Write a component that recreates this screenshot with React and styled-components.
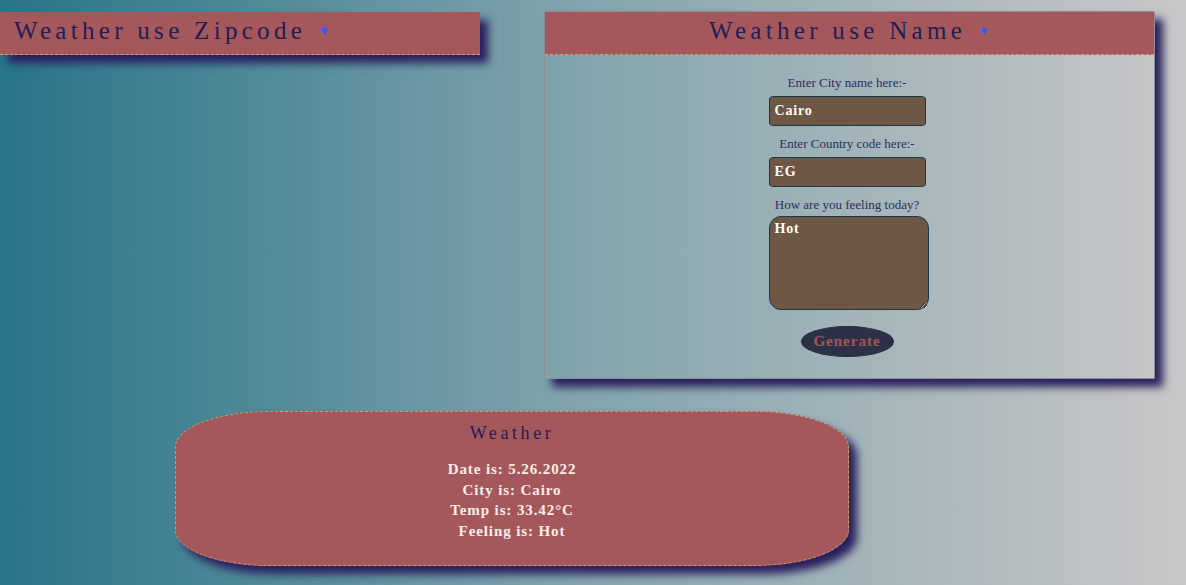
import React from 'react';
import styled, { createGlobalStyle } from 'styled-components';

const GlobalStyle = createGlobalStyle`
  html, body {
    margin: 0;
    padding: 0;
    height: 100%;
  }
  body {
    background: linear-gradient(to right, #287489 0%, #84a5ad 50%, #c8c7c8 100%);
    font-family: "Liberation Serif", "DejaVu Serif", serif;
    overflow: hidden;
  }
`;

const Page = styled.div`
  width: 1186px;
  height: 585px;
  display: flex;
  flex-direction: column;
`;

const TopRow = styled.div`
  display: flex;
  align-items: flex-start;
  gap: 64px;
  padding-top: 11px;
`;

const Section = styled.section`
  width: ${props => props.width};
  margin-top: ${props => props.offset || '0'};
  box-shadow: 8px 8px 8px #2a1f5e;
  border: ${props => (props.framed ? '1px solid #8a8f96' : 'none')};
  border-radius: 2px;
`;

const Header = styled.div`
  height: 43px;
  box-sizing: border-box;
  background: #a4585c;
  border-bottom: 1px dashed #c9a36e;
  display: flex;
  align-items: center;
  justify-content: ${props => (props.center ? 'center' : 'flex-start')};
  padding-left: ${props => (props.center ? '0' : '14px')};
  padding-bottom: 5px;
`;

const Title = styled.h2`
  margin: 0;
  font-family: "Liberation Serif", serif;
  font-weight: normal;
  font-size: 25px;
  letter-spacing: 4.3px;
  color: #231d52;
`;

const Arrow = styled.span`
  margin-left: 12px;
  font-size: 12px;
  color: #2b5cff;
  padding-top: 2px;
`;

const Form = styled.form`
  display: flex;
  flex-direction: column;
  align-items: center;
  padding: 20px 5px 21px 0;
`;

const Label = styled.label`
  font-size: 13px;
  color: #2c2d5c;
  margin-bottom: 5px;
`;

const Input = styled.input`
  width: 157px;
  height: 30px;
  box-sizing: border-box;
  background: #6e5845;
  border: 1px solid #17394a;
  border-radius: 5px / 3px;
  color: #fff;
  font-family: "Liberation Serif", serif;
  font-weight: bold;
  font-size: 14px;
  letter-spacing: 0.8px;
  padding: 0 5px;
  margin-bottom: 10px;
`;

const TextArea = styled.textarea`
  width: 160px;
  height: 94px;
  box-sizing: border-box;
  background: #6e5845;
  border: 1px solid #17394a;
  border-radius: 12px;
  color: #fff;
  font-family: "Liberation Serif", serif;
  font-weight: bold;
  font-size: 14px;
  letter-spacing: 0.8px;
  padding: 4px 5px;
  margin: -2px 0 16px 3px;
  resize: both;
`;

const Button = styled.button`
  width: 93px;
  height: 31px;
  background: #2c3147;
  border: 1px solid #23283c;
  border-radius: 50%;
  color: #a5545b;
  font-family: "Liberation Serif", serif;
  font-weight: bold;
  font-size: 15px;
  letter-spacing: 1px;
  cursor: pointer;
`;

const Card = styled.div`
  margin: 32px 0 0 175px;
  width: 674px;
  height: 155px;
  box-sizing: border-box;
  background: #a4585c;
  border: 1px dashed #c9a36e;
  border-radius: 95px / 36px;
  box-shadow: 8px 8px 8px #2a1f5e;
  display: flex;
  flex-direction: column;
  align-items: center;
  padding-top: 11px;
`;

const CardTitle = styled.h3`
  margin: 0 0 15px;
  font-weight: normal;
  font-size: 18px;
  letter-spacing: 3.6px;
  color: #231d52;
`;

const Line = styled.div`
  color: #fbeee8;
  font-size: 15px;
  font-weight: bold;
  line-height: 20.7px;
  letter-spacing: 0.9px;
`;

const App = () => {
  return (
    <Page>
      <GlobalStyle />
      <TopRow>
        <Section width="480px" offset="1px">
          <Header>
            <Title>Weather use Zipcode</Title>
            <Arrow>▼</Arrow>
          </Header>
        </Section>
        <Section width="609px" framed>
          <Header center>
            <Title>Weather use Name</Title>
            <Arrow>▼</Arrow>
          </Header>
          <Form onSubmit={e => e.preventDefault()}>
            <Label htmlFor="city">Enter City name here:-</Label>
            <Input id="city" defaultValue="Cairo" />
            <Label htmlFor="country">Enter Country code here:-</Label>
            <Input id="country" defaultValue="EG" />
            <Label htmlFor="feel">How are you feeling today?</Label>
            <TextArea id="feel" defaultValue="Hot" />
            <Button type="submit">Generate</Button>
          </Form>
        </Section>
      </TopRow>
      <Card>
        <CardTitle>Weather</CardTitle>
        <Line>Date is: 5.26.2022</Line>
        <Line>City is: Cairo</Line>
        <Line>Temp is: 33.42°C</Line>
        <Line>Feeling is: Hot</Line>
      </Card>
    </Page>
  );
};

export default App;
